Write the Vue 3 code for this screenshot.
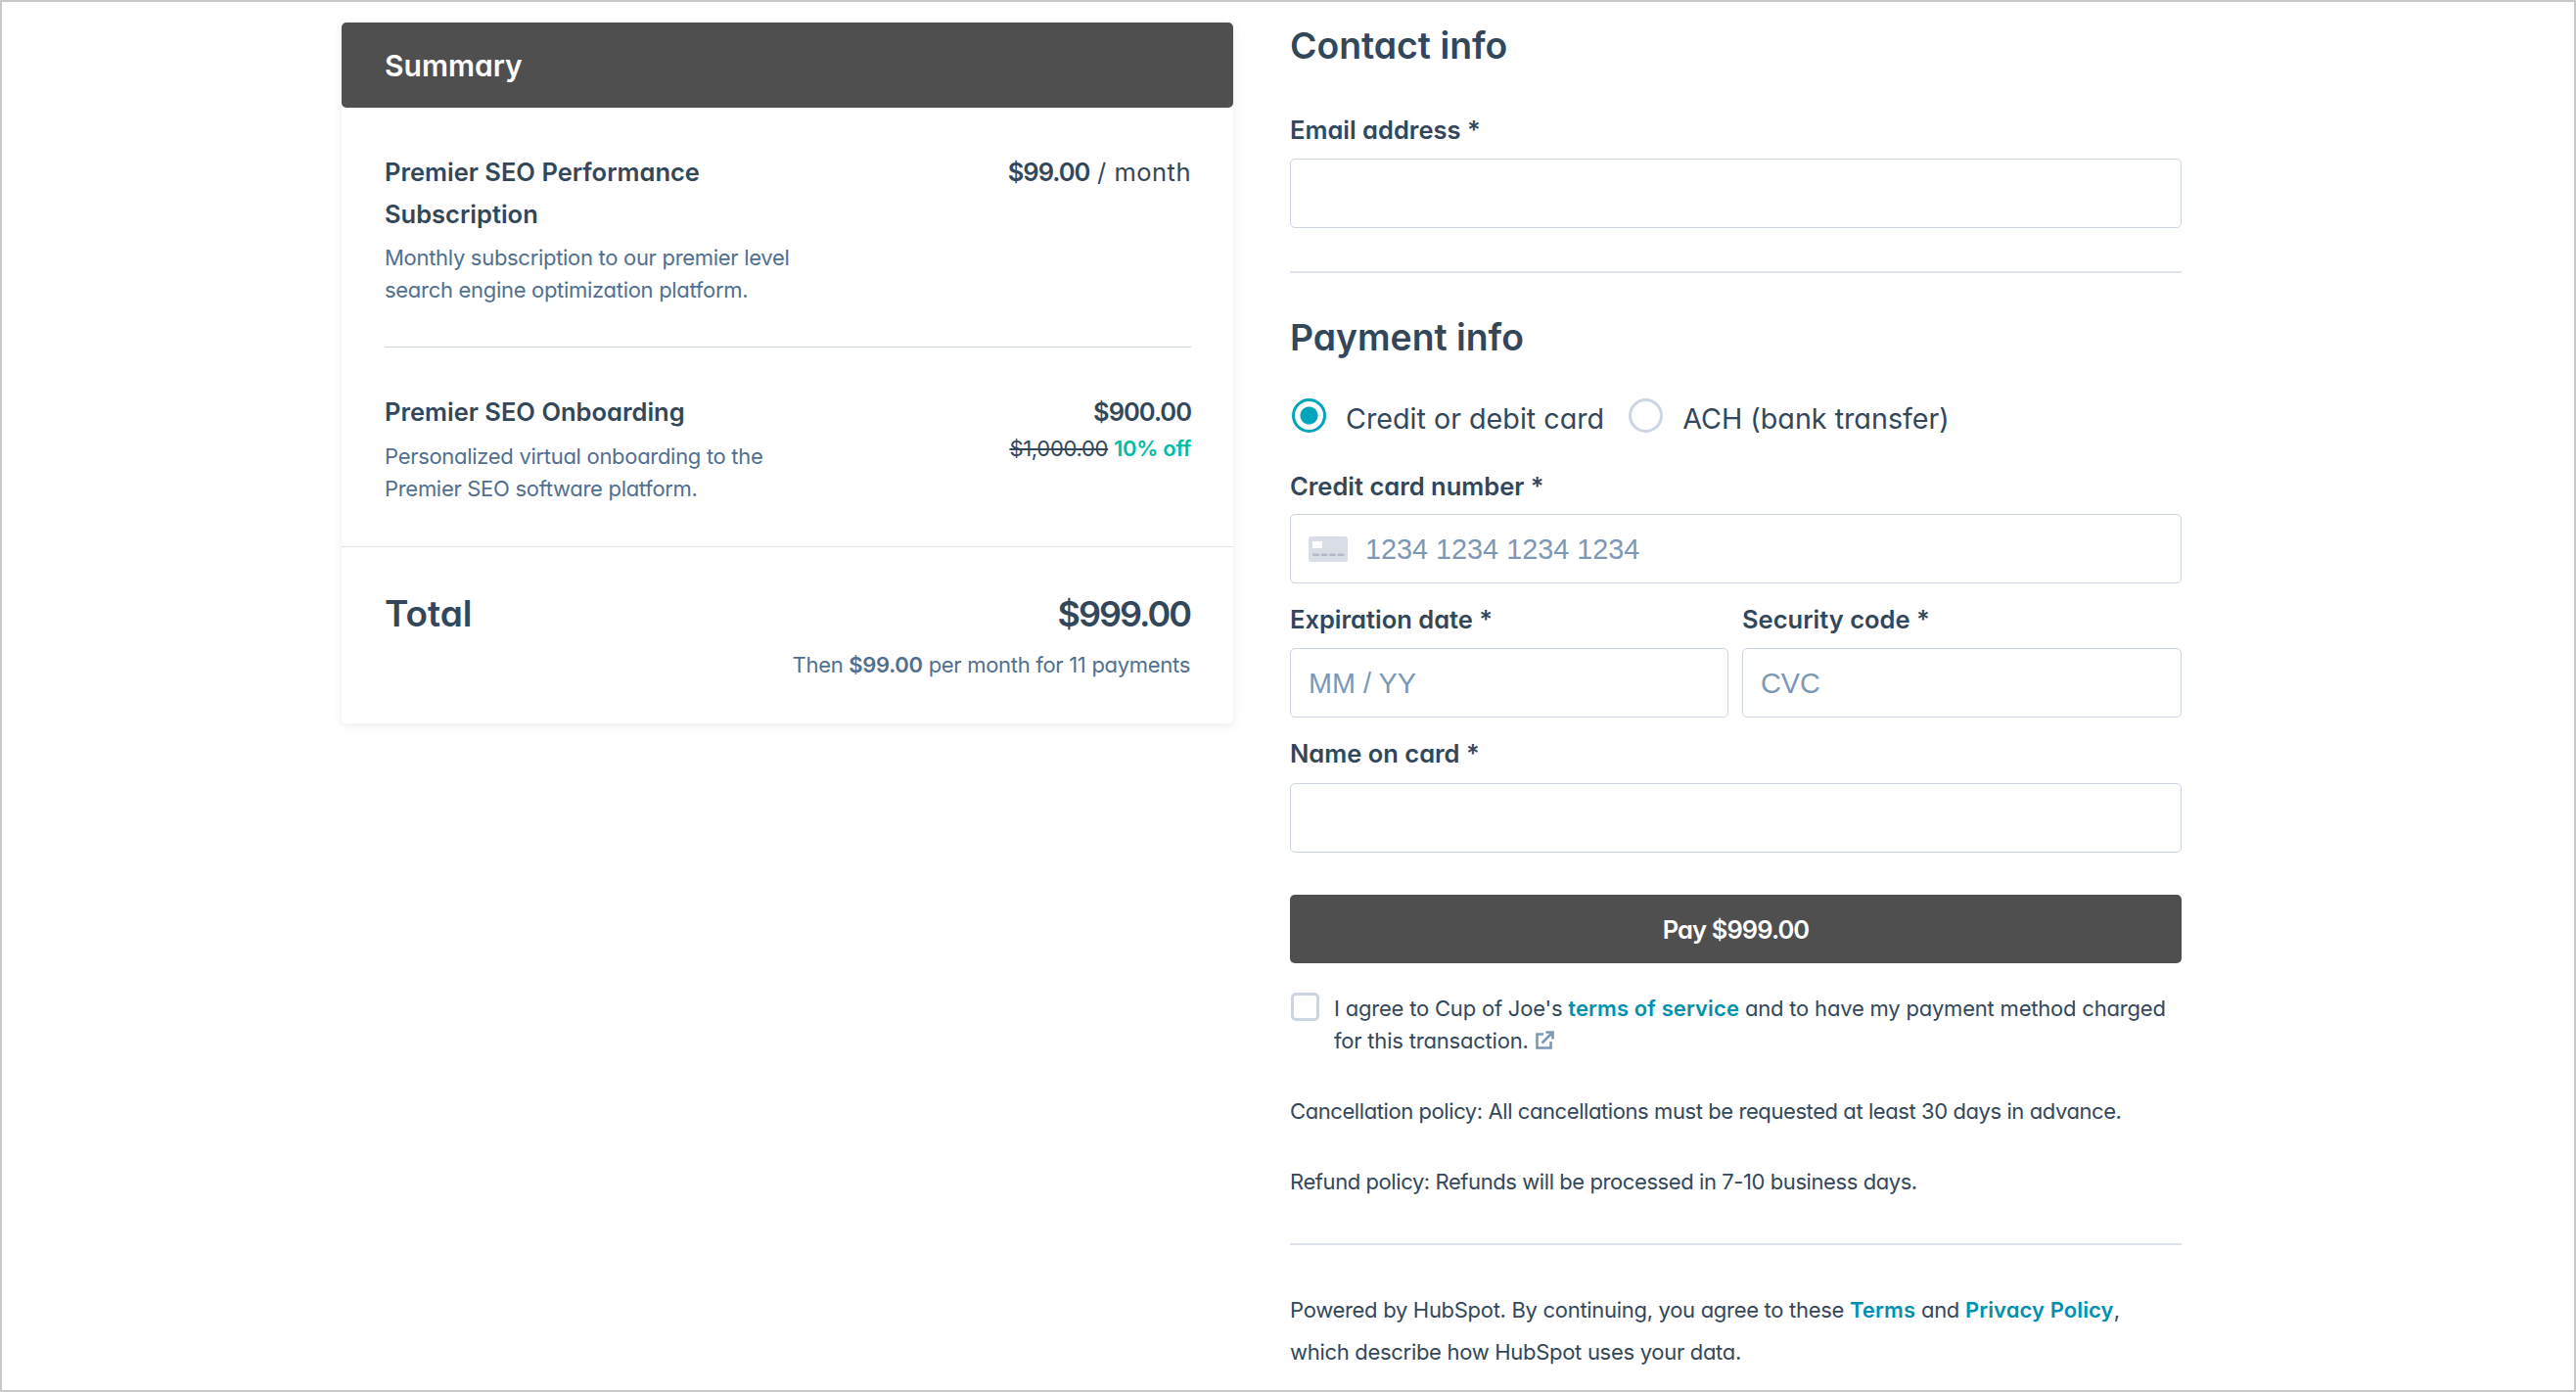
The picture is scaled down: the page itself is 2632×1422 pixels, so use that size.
<script setup>
const fields = [
  { label: 'Expiration date *', placeholder: 'MM / YY' },
  { label: 'Security code *', placeholder: 'CVC' }
]
</script>

<template>
  <div class="page">
    <section class="summary">
      <header class="summary-head">Summary</header>
      <div class="item item-first">
        <div class="item-main">
          <div class="item-title">Premier SEO Performance Subscription</div>
          <p class="item-desc">Monthly subscription to our premier level search engine optimization platform.</p>
        </div>
        <div class="item-price"><strong>$99.00</strong> / month</div>
      </div>
      <div class="item item-second">
        <div class="item-main">
          <div class="item-title">Premier SEO Onboarding</div>
          <p class="item-desc">Personalized virtual onboarding to the Premier SEO software platform.</p>
        </div>
        <div class="item-price">
          <strong>$900.00</strong>
          <div class="discount"><s>$1,000.00</s> <b>10% off</b></div>
        </div>
      </div>
      <div class="total">
        <div class="total-row"><span>Total</span><span class="total-amount">$999.00</span></div>
        <div class="total-sub">Then <strong>$99.00</strong> per month for 11 payments</div>
      </div>
    </section>

    <main class="form">
      <h2 class="section-title">Contact info</h2>
      <label class="label label-email">Email address *</label>
      <div class="input"></div>
      <hr class="rule rule-contact" />
      <h2 class="section-title title-payment">Payment info</h2>
      <div class="radios">
        <span class="radio radio-on"></span>
        <span class="radio-text">Credit or debit card</span>
        <span class="radio radio-off"></span>
        <span class="radio-text">ACH (bank transfer)</span>
      </div>
      <label class="label label-card">Credit card number *</label>
      <div class="input input-text">
        <svg class="card-icon" viewBox="0 0 40 26" aria-hidden="true">
          <rect width="40" height="26" rx="2.5" fill="#d9dde6" />
          <rect x="4" y="5" width="10" height="7" fill="#fff" />
          <rect x="4" y="17.5" width="7" height="2.6" rx="1" fill="#b4bac8" />
          <rect x="12.5" y="17.5" width="7" height="2.6" rx="1" fill="#b4bac8" />
          <rect x="21" y="17.5" width="7" height="2.6" rx="1" fill="#b4bac8" />
          <rect x="29.5" y="17.5" width="7" height="2.6" rx="1" fill="#b4bac8" />
        </svg>
        <span>1234 1234 1234 1234</span>
      </div>
      <div class="split">
        <div v-for="f in fields" :key="f.label" class="split-col">
          <label class="label label-split">{{ f.label }}</label>
          <div class="input input-text"><span>{{ f.placeholder }}</span></div>
        </div>
      </div>
      <label class="label label-name">Name on card *</label>
      <div class="input"></div>
      <button class="pay" type="button">Pay $999.00</button>
      <div class="agree">
        <span class="checkbox"></span>
        <p>I agree to Cup of Joe's <a>terms of service</a> and to have my payment method charged for this transaction.
          <svg class="ext" viewBox="0 0 20 20" aria-hidden="true">
            <path d="M9 3.5H2.5v14h14V11" fill="none" stroke="#7c98b6" stroke-width="2.6" />
            <path d="M7.5 12.5 17.5 2.5M11.5 1.5h7v7" fill="none" stroke="#7c98b6" stroke-width="2.6" />
          </svg>
        </p>
      </div>
      <p class="policy">Cancellation policy: All cancellations must be requested at least 30 days in advance.</p>
      <p class="policy">Refund policy: Refunds will be processed in 7-10 business days.</p>
      <hr class="rule rule-foot" />
      <p class="powered">Powered by HubSpot. By continuing, you agree to these <a>Terms</a> and <a>Privacy Policy</a>,<br />which describe how HubSpot uses your data.</p>
    </main>
  </div>
</template>

<style>
html, body { margin: 0; background: #fff; }
</style>

<style scoped>
.page {
  box-sizing: border-box;
  width: 2632px;
  height: 1422px;
  overflow: hidden;
  display: flex;
  align-items: flex-start;
  gap: 58px;
  padding: 20px 0 0 347px;
  border: 2px solid #c9c9c9;
  background: #fff;
  color: #33475b;
  font-family: Inter, "Noto Sans", sans-serif;
  font-feature-settings: "cv11";
  font-size: 22px;
  letter-spacing: -.3px;
  line-height: 33px;
}
p, h2 { margin: 0; }
strong, b { font-weight: 600; }

.summary {
  width: 911px;
  margin-top: 1px;
  background: #fff;
  border-radius: 5px;
  box-shadow: 0 2px 10px rgba(45, 62, 80, .1);
}
.summary-head {
  height: 87px;
  padding-left: 44px;
  background: #4f4f4f;
  border-radius: 5px;
  color: #fff;
  font-size: 30px;
  font-weight: 600;
  letter-spacing: 0;
  line-height: 88px;
}
.item {
  display: flex;
  justify-content: space-between;
  margin: 0 43px 0 44px;
  padding: 44px 0 42px;
}
.item-first {
  padding-bottom: 41px;
  border-bottom: 1px solid #cbd6e2;
}
.item-main { width: 420px; }
.item-title {
  font-size: 25.5px;
  font-weight: 600;
  letter-spacing: 0;
  line-height: 43px;
}
.item-desc {
  margin-top: 7px;
  color: #516f90;
}
.item-second .item-desc { margin-top: 8px; }
.item-price {
  font-size: 25.5px;
  letter-spacing: .5px;
  line-height: 43px;
  text-align: right;
  white-space: nowrap;
}
.item-price strong { letter-spacing: -1px; }
.discount {
  font-size: 22px;
  letter-spacing: -.3px;
  line-height: 33px;
}
.discount b { color: #00bda5; }
.total {
  padding: 38px 44px 43px;
  border-top: 1px solid #dfe3eb;
}
.total-row {
  display: flex;
  justify-content: space-between;
  font-size: 37px;
  font-weight: 600;
  letter-spacing: 0;
  line-height: 60px;
}
.total-amount {
  font-size: 36px;
  letter-spacing: -2px;
}
.total-sub {
  margin-top: 6px;
  color: #516f90;
  text-align: right;
}

.form { width: 911px; }
.section-title {
  font-size: 37.3px;
  font-weight: 600;
  letter-spacing: 0;
  line-height: 50px;
}
.title-payment { margin-top: 41px; }
.label {
  display: block;
  margin-bottom: 11px;
  font-size: 25.5px;
  font-weight: 600;
  letter-spacing: 0;
  line-height: 34px;
}
.label-email { margin-top: 44px; margin-bottom: 12px; }
.label-card { margin-top: 37px; }
.label-split { margin-top: 20px; margin-bottom: 12px; }
.label-name { margin-top: 20px; margin-bottom: 13px; }
.input {
  box-sizing: border-box;
  display: flex;
  align-items: center;
  height: 71px;
  padding-left: 18px;
  background: #fff;
  border: 1px solid #cbd6e2;
  border-radius: 5px;
}
.input-text {
  padding-top: 1px;
  color: #7c98b6;
  font-family: "Liberation Sans", Arial, sans-serif;
  font-feature-settings: normal;
  font-size: 28.8px;
  letter-spacing: 0;
}
.card-icon {
  width: 40px;
  height: 26px;
  margin-right: 18px;
}
.rule {
  height: 2px;
  margin: 0;
  border: 0;
  background: #dfe3eb;
}
.rule-contact { margin-top: 44px; }
.rule-foot { margin-top: 46px; }
.radios {
  display: flex;
  align-items: center;
  height: 36px;
  margin-top: 37px;
  padding-left: 2px;
}
.radio {
  box-sizing: border-box;
  flex: none;
  width: 35px;
  height: 35px;
  margin-top: -2px;
  border-radius: 50%;
}
.radio-on {
  border: 3px solid #00a4bd;
  background: radial-gradient(circle, #00a4bd 8.5px, #fff 9.5px);
}
.radio-off { border: 3px solid #cbd6e2; }
.radio-text {
  margin: 5px 25px 0 20px;
  font-size: 28.7px;
  letter-spacing: 0;
  line-height: 36px;
  white-space: nowrap;
}
.split {
  display: grid;
  grid-template-columns: 448px 449px;
  gap: 14px;
}
.pay {
  display: block;
  width: 100%;
  height: 70px;
  margin-top: 43px;
  border: 0;
  border-radius: 5px;
  background: #4f4f4f;
  color: #fff;
  font: 600 25.5px/70px Inter, "Noto Sans", sans-serif;
  font-feature-settings: "cv11";
  letter-spacing: -.9px;
}
.agree {
  display: flex;
  gap: 15px;
  margin-top: 30px;
  letter-spacing: -.2px;
}
.checkbox {
  box-sizing: border-box;
  flex: none;
  width: 29px;
  height: 29px;
  margin-left: 1px;
  border: 3px solid #cbd6e2;
  border-radius: 5px;
  background: #fff;
}
a {
  color: #0091ae;
  font-weight: 600;
  letter-spacing: .1px;
}
.ext {
  width: 20px;
  height: 20px;
  vertical-align: -2px;
}
.policy {
  margin-top: 39px;
  letter-spacing: -.42px;
}
.powered {
  margin-top: 45px;
  line-height: 43px;
}
</style>
